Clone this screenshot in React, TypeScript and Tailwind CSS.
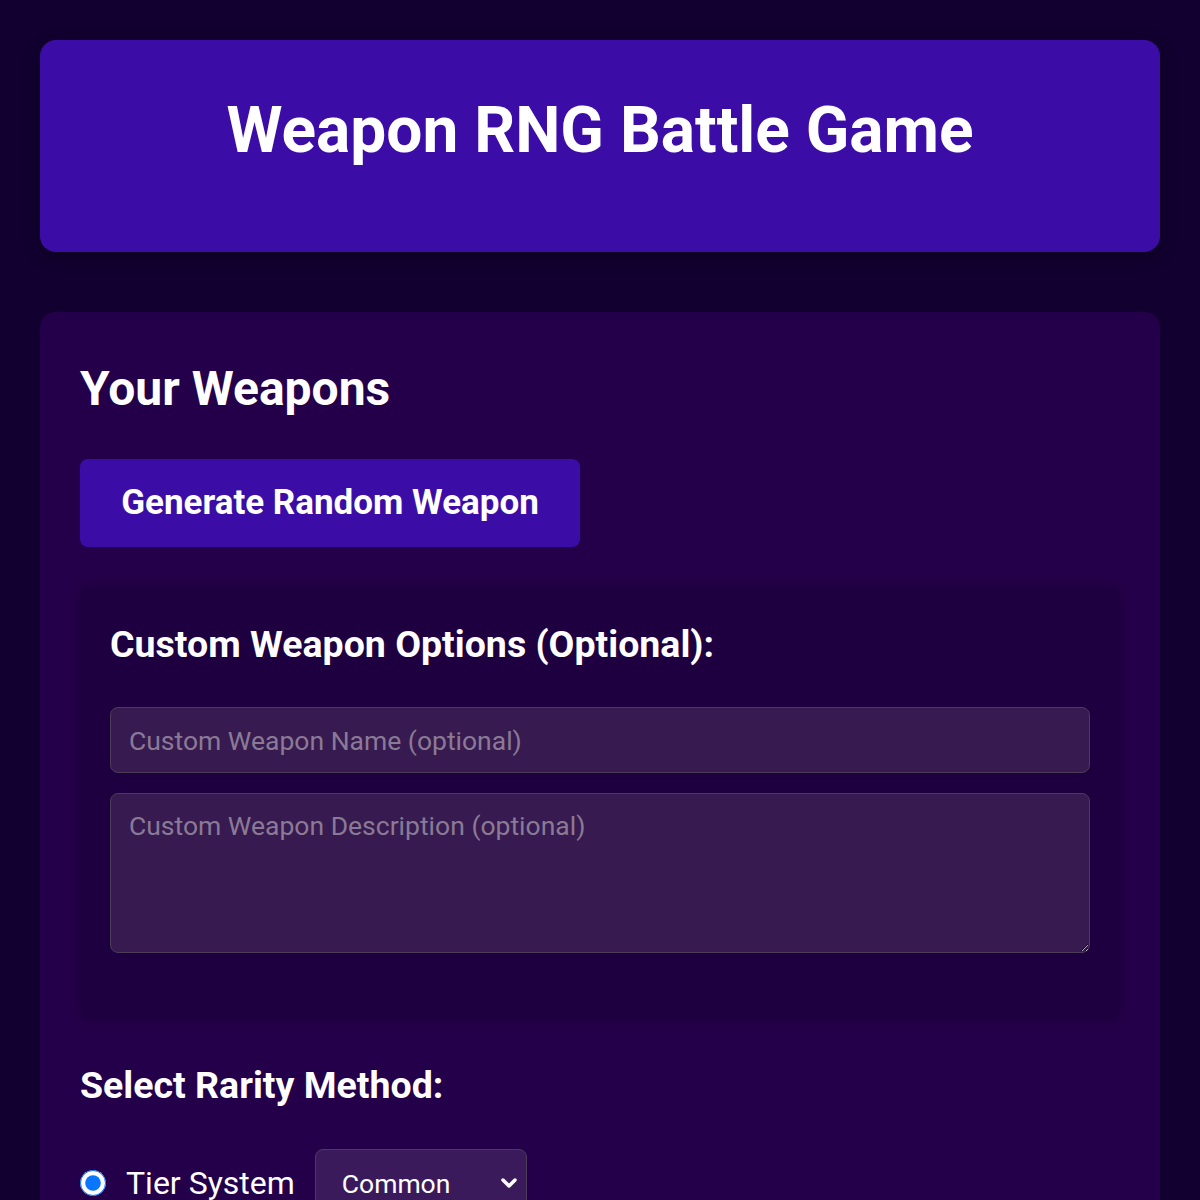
import { useState } from "react";

export default function App() {
  const [method, setMethod] = useState("tier");
  const [tier, setTier] = useState("Common");
  const [name, setName] = useState("");
  const [desc, setDesc] = useState("");

  const field =
    "w-full rounded-lg border border-[#4b3c58] bg-[#371a4f] px-[18px] text-[26.5px] text-white placeholder:text-[#8a7a96] outline-none";

  return (
    <div
      className="min-h-screen bg-[#120030] p-10 text-white"
      style={{ fontFamily: "Roboto, 'Noto Sans', sans-serif" }}
    >
      <header className="rounded-2xl bg-[#3c0da6] pt-[53px] pb-[82px] text-center shadow-[0_4px_16px_rgba(0,0,0,0.35)]">
        <h1 className="text-[64px] font-bold leading-[1.2]">Weapon RNG Battle Game</h1>
      </header>

      <section className="mt-[60px] rounded-2xl bg-[#25004a] px-10 pt-12 pb-10">
        <h2 className="text-[48px] font-bold leading-[1.2]">Your Weapons</h2>

        <button className="mt-[42px] h-[88px] w-[500px] rounded-lg bg-[#3c0da6] text-[35px] font-bold">
          Generate Random Weapon
        </button>

        <div className="mt-10 rounded-lg bg-[#1e0040] px-[30px] pt-[35px] pb-[66px] shadow-[0_0_12px_rgba(0,0,0,0.25)]">
          <h3 className="text-[37.5px] font-bold leading-[1.2]">Custom Weapon Options (Optional):</h3>
          <input
            className={`${field} mt-10 h-[66px]`}
            placeholder="Custom Weapon Name (optional)"
            value={name}
            onChange={(e) => setName(e.target.value)}
          />
          <textarea
            className={`${field} mt-5 block h-[160px] pt-[12px]`}
            placeholder="Custom Weapon Description (optional)"
            value={desc}
            onChange={(e) => setDesc(e.target.value)}
          />
        </div>

        <h3 className="mt-[44px] text-[37.5px] font-bold leading-[1.2]">Select Rarity Method:</h3>

        <div className="mt-[41px] flex items-center gap-[20px]">
          <label className="flex items-center gap-[20px] text-[32px]">
            <input
              type="radio"
              name="method"
              className="h-[26px] w-[26px] accent-[#0a75ff]"
              checked={method === "tier"}
              onChange={() => setMethod("tier")}
            />
            Tier System
          </label>
          <div className="relative">
            <select
              className="h-[68px] w-[212px] appearance-none rounded-lg border border-[#4b3c58] bg-[#3b1a5c] pl-[26px] text-[26.5px] text-white outline-none"
              value={tier}
              onChange={(e) => setTier(e.target.value)}
            >
              <option>Common</option>
              <option>Uncommon</option>
              <option>Rare</option>
              <option>Epic</option>
              <option>Legendary</option>
            </select>
            <svg
              className="pointer-events-none absolute right-[8px] top-1/2 h-[20px] w-[20px] -translate-y-1/2"
              viewBox="0 0 20 20"
              fill="none"
              stroke="white"
              strokeWidth="3.5"
              strokeLinecap="round"
              strokeLinejoin="round"
            >
              <path d="M4 7l6 6 6-6" />
            </svg>
          </div>
        </div>

        <div className="mt-6 flex items-center gap-[20px] text-[32px]">
          <input
            type="radio"
            name="method"
            className="h-[26px] w-[26px] accent-[#0a75ff]"
            checked={method === "random"}
            onChange={() => setMethod("random")}
          />
          Random Chance
        </div>
      </section>
    </div>
  );
}
